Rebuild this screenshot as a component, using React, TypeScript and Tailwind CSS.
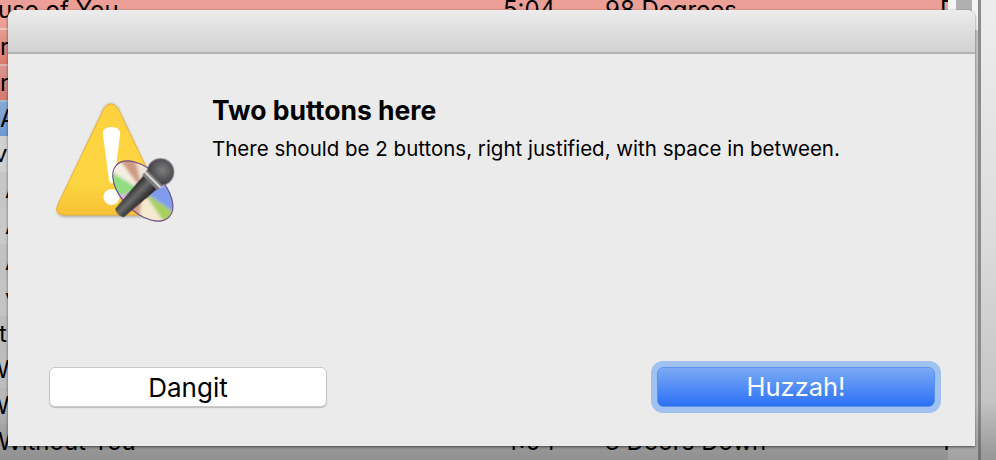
import React from 'react';

interface Row {
  title: string;
  indent: string;
  time?: string;
  artist?: string;
  track?: string;
  color: string;
}

const rows: Row[] = [
  { title: 'use of You', indent: '-ml-[2px]', time: '5:04', artist: '98 Degrees', track: 'D', color: 'bg-[#eb9f96]' },
  { title: 'r', indent: 'ml-0', color: 'border-t-2 border-[#f0c4bd] bg-gradient-to-b from-[#e69c92] to-[#dc7a6e]' },
  { title: 'r', indent: 'ml-0', color: 'border-t-2 border-[#e0b4ae] bg-gradient-to-b from-[#d9968e] to-[#d67a6e]' },
  { title: 'A', indent: 'ml-0', color: 'border-t-2 border-[#a4b8d4] bg-gradient-to-b from-[#85a9d8] to-[#6c9ad2]' },
  { title: 'v', indent: '-ml-[6px]', color: 'bg-[#d0d0d0]' },
  { title: 'A', indent: 'ml-[5px]', color: 'bg-[#c6c6c6]' },
  { title: 'A', indent: 'ml-[5px]', color: 'bg-[#c9c9c9]' },
  { title: 'A', indent: 'ml-[5px]', color: 'bg-[#c2c2c2]' },
  { title: 'v', indent: 'ml-[5px]', color: 'bg-[#c4c4c4]' },
  { title: 'ti', indent: '-ml-[1px]', color: 'bg-[#bcbcbc]' },
  { title: 'W', indent: '-ml-[14px]', color: 'bg-[#bdbdbd]' },
  { title: 'W', indent: '-ml-[14px]', color: 'bg-[#b8b8b8]' },
  { title: 'Without You', indent: '-ml-[2px]', time: '4:04', artist: '3 Doors Down', track: '1', color: 'bg-[#b4b4b4]' },
];

const CautionIcon = () => (
  <svg width="130" height="130" viewBox="50 95 130 130" className="shrink-0">
    <defs>
      <linearGradient id="tri" x1="0" y1="0" x2="0" y2="1">
        <stop offset="0" stopColor="#fdd23e" />
        <stop offset="0.7" stopColor="#fdd542" />
        <stop offset="1" stopColor="#f8c236" />
      </linearGradient>
      <linearGradient id="micBody" x1="0" y1="0" x2="1" y2="0">
        <stop offset="0" stopColor="#262626" />
        <stop offset="0.45" stopColor="#6a6a6a" />
        <stop offset="1" stopColor="#1c1c1c" />
      </linearGradient>
      <radialGradient id="micHead" cx="0.5" cy="0.4" r="0.6">
        <stop offset="0" stopColor="#7e7e7e" />
        <stop offset="1" stopColor="#3a3a3a" />
      </radialGradient>
      <clipPath id="disc">
        <ellipse cx="0" cy="0" rx="37" ry="21" />
      </clipPath>
      <filter id="soft" x="-20%" y="-20%" width="140%" height="140%">
        <feGaussianBlur stdDeviation="0.35" />
      </filter>
      <filter id="wash" x="-20%" y="-20%" width="140%" height="140%">
        <feGaussianBlur stdDeviation="1.8" />
      </filter>
      <filter id="drop" x="-20%" y="-20%" width="140%" height="140%">
        <feGaussianBlur stdDeviation="1.6" />
      </filter>
    </defs>
    <path
      d="M105 108 L60 205 Q55 217 67 217 L157 217 Q169 217 164 205 L119 108 Q112 99 105 108 Z"
      fill="#777"
      opacity="0.55"
      filter="url(#drop)"
    />
    <path
      d="M105 108.5 L59 204 Q54 215 66 215 L158 215 Q170 215 165 204 L119 108.5 Q112 99 105 108.5 Z"
      fill="url(#tri)"
      stroke="#eeb03c"
      strokeWidth="1"
    />
    <path
      d="M104 135 Q103 127 112.5 127 Q122 127 121 135 L115.5 180 Q112.5 187 110 180 Z"
      fill="#fff"
      filter="url(#soft)"
    />
    <circle cx="112.5" cy="197" r="8" fill="#fff" filter="url(#soft)" />
    <g transform="translate(143.8 191) rotate(45)">
      <g clipPath="url(#disc)">
        <g filter="url(#wash)">
          <rect x="-42" y="-26" width="84" height="52" fill="#e0cdbb" />
          <polygon points="0,0 -42,-26 -42,-6" fill="#cf9a80" />
          <polygon points="0,0 -42,-26 -6,-26" fill="#efe2d8" />
          <polygon points="0,0 -6,-26 16,-26" fill="#e2b8f0" />
          <polygon points="0,0 16,-26 42,-26 42,-8" fill="#7f9cf0" />
          <polygon points="0,0 42,-8 42,8" fill="#a8d060" />
          <polygon points="0,0 42,8 42,26 20,26" fill="#f4ead0" />
          <polygon points="0,0 20,26 -2,26" fill="#d6a090" />
          <polygon points="0,0 -2,26 -18,26" fill="#e6b4ea" />
          <polygon points="0,0 -18,26 -42,26 -42,10" fill="#92dc84" />
          <polygon points="0,0 -42,10 -42,-6" fill="#f5eee2" />
        </g>
      </g>
      <ellipse cx="0" cy="0" rx="37" ry="21" fill="none" stroke="#6d4a86" strokeWidth="1.1" />
      <ellipse cx="0" cy="0" rx="9" ry="5.5" fill="#a8a078" opacity="0.85" />
    </g>
    <g transform="translate(161.5 172) rotate(45)" filter="url(#soft)">
      <path d="M-10 9 L10 9 L6 58 Q0 62 -6 58 Z" fill="url(#micBody)" />
      <circle cx="0" cy="0" r="13.5" fill="url(#micHead)" stroke="#8c7aa0" strokeWidth="0.8" />
      <rect x="-11" y="8" width="22" height="7" rx="1" fill="#7d7d7d" />
      <rect x="-11" y="10" width="22" height="2" fill="#dadada" />
    </g>
  </svg>
);

export default function App() {
  return (
    <div className="relative flex h-[460px] w-[996px] overflow-hidden bg-[#c4c4c4] font-['Inter','Liberation_Sans',sans-serif] text-black">
      <div className="flex w-[978px] shrink-0">
        <div className="-mt-[8px] w-[948px] shrink-0 bg-[#9c9c9c]">
          {rows.map((row, i) => (
            <div
              key={i}
              className={`grid h-[36px] grid-cols-[503px_102px_335px_8px] items-center text-[24px] leading-[30px] whitespace-nowrap ${row.color}`}
            >
              <span className={row.indent}>{row.title}</span>
              <span>{row.time}</span>
              <span>{row.artist}</span>
              <span>{row.track}</span>
            </div>
          ))}
        </div>
        <div className="flex w-[30px] flex-col bg-[#c8c8c8]">
          <div className="flex h-[30px] bg-[#f4f4f4]">
            <div className="w-2" />
            <div className="w-[16px] bg-[#b0b0b0]" />
          </div>
        </div>
      </div>
      <div className="w-[3px] shrink-0 bg-[#8c8c8c]" />
      <div className="flex-1 bg-gradient-to-b from-[#ededed] via-[#dddddd] to-[#bcbcbc]" />

      {/* dim from the sheet's shadow */}
      <div className="pointer-events-none absolute inset-x-0 bottom-0 h-[60px] bg-gradient-to-b from-transparent to-black/20" />

      <div className="absolute top-[10px] left-[8px] flex h-[436px] w-[967px] flex-col rounded-t-[8px] bg-[#ebebeb] shadow-[0_1px_3px_rgba(0,0,0,0.55)]">
        <div className="h-[44px] shrink-0 rounded-t-[8px] border-b-2 border-[#b3b3b3] bg-gradient-to-b from-[#ececec] to-[#d2d2d2]" />
        <div className="flex flex-1 flex-col justify-between pr-[40px] pb-[39px] pl-[41px]">
          <div className="flex pt-[41px]">
            <CautionIcon />
            <div className="flex flex-col pl-[34px]">
              <h1 className="-ml-[1px] text-[26.5px] leading-[30px] font-bold">Two buttons here</h1>
              <p className="-ml-[1px] pt-[11px] text-[20.5px] leading-[26px]">
                There should be 2 buttons, right justified, with space in between.
              </p>
            </div>
          </div>
          <div className="flex justify-between">
            <button className="h-[40px] w-[278px] rounded-[6px] border border-[#c9c9c9] bg-white text-[26px] shadow-[0_1px_1px_rgba(0,0,0,0.2)]">
              Dangit
            </button>
            <button className="h-[40px] w-[278px] rounded-[6px] border border-[#5c93ea] bg-gradient-to-b from-[#7ba9f5] to-[#2a6ff5] text-[25.5px] text-white shadow-[0_0_0_6px_#9fc2f0]">
              Huzzah!
            </button>
          </div>
        </div>
      </div>
    </div>
  );
}
